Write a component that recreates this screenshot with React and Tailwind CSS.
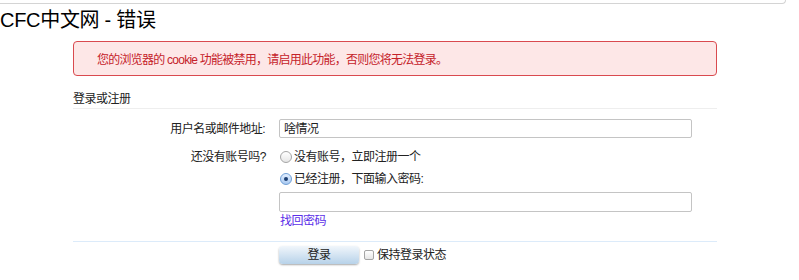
import React from "react";

function Radio({ checked }) {
  return (
    <span
      className={
        "inline-flex items-center justify-center w-[12px] h-[12px] rounded-full border shrink-0 " +
        (checked
          ? "border-[#6f9fd6] bg-gradient-to-b from-[#e3efff] to-[#a9c9f0]"
          : "border-[#a5a5a5] bg-gradient-to-b from-[#ffffff] to-[#e6e6e6]")
      }
    >
      {checked && <span className="w-[4px] h-[4px] rounded-full bg-[#1d3f73]" />}
    </span>
  );
}

export default function App() {
  return (
    <div className="w-[799px] h-[280px] bg-white text-[12px] text-[#222] tracking-[-0.5px] overflow-hidden font-['Liberation_Sans','Noto_Sans_CJK_SC',sans-serif]">
      <div className="h-[4px] w-[786px] border-b border-r border-[#d4d4d4] rounded-br-[6px]" />
      <h1 className="text-[20px] leading-[30px] text-black mt-[1px] tracking-[-0.3px]">CFC中文网 - 错误</h1>

      <div className="ml-[73px] w-[644px]">
        <div className="mt-[6px] h-[35px] flex items-center pl-[23px] pt-[2px] bg-[#fde7e7] border border-[#d94a4f] rounded-[4px] text-[#c5222a] tracking-[-0.75px]">
          您的浏览器的 cookie 功能被禁用，请启用此功能，否则您将无法登录。
        </div>

        <div className="mt-[15px] leading-[16px] pb-[1px] border-b border-[#eeeeee]">登录或注册</div>

        <div className="flex items-center mt-[10px]">
          <div className="w-[193px] text-right pr-[1px]">用户名或邮件地址:</div>
          <div className="ml-[13px] w-[413px] h-[19px] border border-[#c4c4c4] rounded-[2px] flex items-center pl-[4px] text-[#222]">
            啥情况
          </div>
        </div>

        <div className="flex items-center mt-[11px] leading-[16px]">
          <div className="w-[193px] text-right">还没有账号吗?</div>
          <div className="ml-[14px] flex items-center gap-[2px]">
            <Radio />
            <span>没有账号，立即注册一个</span>
          </div>
        </div>

        <div className="flex items-center mt-[6px] leading-[16px]">
          <div className="w-[193px]" />
          <div className="ml-[14px] flex items-center gap-[2px]">
            <Radio checked />
            <span>已经注册，下面输入密码:</span>
          </div>
        </div>

        <div className="flex mt-[5px]">
          <div className="w-[193px]" />
          <div className="ml-[13px] w-[413px] h-[20px] border border-[#c4c4c4] rounded-[2px]" />
        </div>

        <div className="flex mt-[1px] leading-[16px]">
          <div className="w-[193px]" />
          <a className="ml-[14px] text-[#5b2fe8]" href="#">找回密码</a>
        </div>

        <div className="mt-[12px] border-t border-[#dcebfa]" />

        <div className="flex items-center mt-[4px]">
          <div className="w-[193px]" />
          <button className="ml-[13px] w-[80px] h-[18px] rounded-[4px] bg-gradient-to-b from-[#f1f6fb] to-[#b7d2e9] shadow-[0_1px_2px_rgba(0,0,0,0.35)] text-[#222] leading-[18px]">
            登录
          </button>
          <span className="ml-[5px] w-[10px] h-[10px] rounded-[2px] border border-[#a5a5a5] bg-gradient-to-b from-[#ffffff] to-[#e6e6e6]" />
          <span className="ml-[3px]">保持登录状态</span>
        </div>
      </div>
    </div>
  );
}
